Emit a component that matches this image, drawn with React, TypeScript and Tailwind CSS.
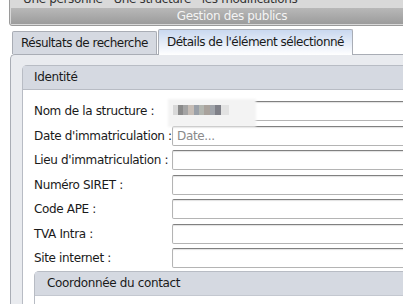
import React from "react";

const font = { fontFamily: "Tahoma, 'DejaVu Sans', Verdana, sans-serif", letterSpacing: "-0.35px" };

const labels = [
  "Date d'immatriculation :",
  "Lieu d'immatriculation :",
  "Numéro SIRET :",
  "Code APE :",
  "TVA Intra :",
  "Site internet :",
];

function Input({ placeholder }: { placeholder?: string }) {
  return (
    <div className="h-[20px] w-[260px] shrink-0 rounded-[2px] border border-[#b4b4b4] border-t-[#808080] bg-white shadow-[inset_0_1px_1px_rgba(0,0,0,0.12)] pl-[4px] text-[12px] leading-[18px] text-[#8a8a8a]">
      {placeholder}
    </div>
  );
}

export default function App() {
  return (
    <div className="w-[403px] h-[304px] overflow-hidden bg-white text-[#1a1a1a] whitespace-nowrap" style={font}>
      {/* top header box */}
      <div className="ml-[9px] mt-[-10px] w-[446px] rounded-b-[3px] border border-[#9a9a9a] p-[1px] bg-[#d9d9d9]">
        <div className="h-[16px] pl-[12px] text-[12px] leading-[15px] text-[#333]">
          Une personne - Une structure - les modifications
        </div>
        <div className="h-[16px] bg-gradient-to-b from-[#b8b8b8] to-[#9c9c9c] text-center text-[12px] leading-[16px] text-[#f4f4f4]">
          Gestion des publics
        </div>
      </div>

      {/* tabs */}
      <div className="mt-[3px] flex items-end pl-[12px] h-[25px] tracking-[-0.5px]">
        <div className="h-[23px] rounded-t-[2px] border border-b-0 border-[#a9adb5] bg-[#d5d9e1] px-[8px] text-[12px] leading-[22px]">
          Résultats de recherche
        </div>
        <div className="relative z-10 -mb-[1px] ml-[1px] h-[26px] rounded-t-[2px] border border-b-0 border-[#a9adb5] bg-gradient-to-b from-[#c9d8ef] to-white px-[8px] text-[12px] leading-[24px]">
          Détails de l'élément sélectionné
        </div>
      </div>

      {/* panel */}
      <div className="ml-[10px] h-[260px] rounded-tl-[5px] border-l border-t border-[#a9adb5] bg-[#e9ebef] pl-[11px] pt-[10px]">
        <div className="rounded-tl-[5px] border-l border-t border-[#b8bcc4] bg-white">
          <div className="h-[24px] border-b border-[#b8bcc4] bg-[#d5d9e1] pl-[11px] text-[12px] leading-[23px]">
            Identité
          </div>
          <div className="pl-[11px] pt-[9px]">
            <div className="flex h-[24.5px] items-center">
              <div className="w-[138px] shrink-0 text-[12px]">Nom de la structure :</div>
              <div className="relative">
                <Input />
                <div className="absolute left-[-4px] top-[-2px] h-[28px] w-[88px] bg-[#f3f3f3] blur-[1px]" />
                <div className="absolute left-[1px] top-[4px] flex h-[10px] gap-0 blur-[0.5px]">
                  <div className="w-[5px] bg-[#d8d8d8]" />
                  <div className="w-[5px] bg-[#8a8a8a]" />
                  <div className="w-[5px] bg-[#a4a4a4]" />
                  <div className="w-[6px] bg-[#c6bdb6]" />
                  <div className="w-[5px] bg-[#9aa0a8]" />
                  <div className="w-[5px] bg-[#b3b6b0]" />
                  <div className="w-[6px] bg-[#a9a29c]" />
                  <div className="w-[5px] bg-[#a0a4aa]" />
                  <div className="w-[6px] bg-[#7f8088]" />
                  <div className="w-[8px] bg-[#e2e2e2]" />
                </div>
              </div>
            </div>
            {labels.map((l, i) => (
              <div key={l} className="flex h-[24.5px] items-center">
                <div className="w-[138px] shrink-0 text-[12px]">{l}</div>
                <Input placeholder={i === 0 ? "Date..." : undefined} />
              </div>
            ))}
            <div className="rounded-tl-[5px] border-l border-t border-[#b8bcc4] bg-white">
              <div className="h-[24px] border-b border-[#c4c8d0] bg-[#d5d9e1] pl-[12px] text-[12px] leading-[23px]">
                Coordonnée du contact
              </div>
              <div className="h-[40px]" />
            </div>
          </div>
        </div>
      </div>
    </div>
  );
}
